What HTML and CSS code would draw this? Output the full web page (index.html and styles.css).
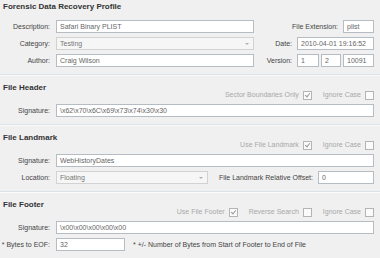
FILE: index.html
```html
<!DOCTYPE html>
<html lang="en">
<head>
  <meta charset="UTF-8">
  <title>Forensic Data Recovery Profile</title>
  <link rel="stylesheet" href="styles.css">
</head>
<body>

<div class="profile">

  <div class="block first">
    <h2>Forensic Data Recovery Profile</h2>
    <div class="row">
      <span class="lbl">Description:</span>
      <span class="field wide">Safari Binary PLIST</span>
      <span class="lbl-r">File Extension:</span>
      <span class="field ext">plist</span>
    </div>
    <div class="row">
      <span class="lbl">Category:</span>
      <span class="field wide select">Testing<i class="arrow"></i></span>
      <span class="lbl-r">Date:</span>
      <span class="field date">2010-04-01 19:16:52</span>
    </div>
    <div class="row">
      <span class="lbl">Author:</span>
      <span class="field wide">Craig Wilson</span>
      <span class="lbl-r">Version:</span>
      <span class="field v1">1</span>
      <span class="field v2">2</span>
      <span class="field ext">10091</span>
    </div>
  </div>

  <div class="block">
    <h2>File Header</h2>
    <div class="opts">
      <span class="opt">Sector Boundaries Only <i class="cb on"></i></span>
      <span class="opt">Ignore Case <i class="cb"></i></span>
    </div>
    <div class="row">
      <span class="lbl">Signature:</span>
      <span class="field grow">\x62\x70\x6C\x69\x73\x74\x30\x30</span>
    </div>
  </div>

  <div class="block">
    <h2>File Landmark</h2>
    <div class="opts">
      <span class="opt">Use File Landmark <i class="cb on"></i></span>
      <span class="opt">Ignore Case <i class="cb"></i></span>
    </div>
    <div class="row">
      <span class="lbl">Signature:</span>
      <span class="field grow">WebHistoryDates</span>
    </div>
    <div class="row">
      <span class="lbl">Location:</span>
      <span class="field loc select">Floating<i class="arrow"></i></span>
      <span class="lbl-r">File Landmark Relative Offset:</span>
      <span class="field offset">0</span>
    </div>
  </div>

  <div class="block">
    <h2>File Footer</h2>
    <div class="opts">
      <span class="opt">Use File Footer <i class="cb on"></i></span>
      <span class="opt">Reverse Search <i class="cb"></i></span>
      <span class="opt">Ignore Case <i class="cb"></i></span>
    </div>
    <div class="row">
      <span class="lbl">Signature:</span>
      <span class="field grow">\x00\x00\x00\x00\x00</span>
    </div>
    <div class="row">
      <span class="lbl">* Bytes to EOF:</span>
      <span class="field eof">32</span>
      <span class="note">* +/- Number of Bytes from Start of Footer to End of File</span>
    </div>
  </div>

</div>

</body>
</html>
```

FILE: styles.css
```css
body {
  margin: 0;
  background-color: #f0f0f0;
  font-family: "Liberation Sans", Arial, sans-serif;
  font-size: 7px;
  color: #444;
}

.profile {
  width: 380px;
  height: 258px;
  overflow: hidden;
}

.block {
  padding: 9px 6px 7px 0;
  border-top: 1px solid #dbe3ea;
  box-shadow: inset 0 1px 0 #fbfbfb;
}

.block.first {
  padding-top: 3px;
  border-top: none;
  box-shadow: none;
}

h2 {
  margin: 0 0 0 3px;
  height: 8px;
  line-height: 8px;
  font-size: 8px;
  font-weight: bold;
  color: #333;
}

.first h2 {
  margin-bottom: 9px;
}

.opts {
  display: flex;
  justify-content: flex-end;
  gap: 11px;
  height: 8px;
  margin-top: -1px;
  margin-bottom: 5px;
  color: #a8a8a8;
}

.opt {
  display: flex;
  align-items: center;
  gap: 4px;
  line-height: 8px;
}

.cb {
  display: block;
  width: 7px;
  height: 7px;
  border: 1px solid #b4b4b4;
  background: #fbfbfb;
  position: relative;
}

.cb.on::after {
  content: "";
  position: absolute;
  left: 2px;
  top: 0px;
  width: 2px;
  height: 4px;
  border-right: 1px solid #9a9a9a;
  border-bottom: 1px solid #9a9a9a;
  transform: rotate(40deg);
}

.row {
  display: flex;
  align-items: center;
  height: 13px;
  margin-bottom: 4px;
}

.row:last-child {
  margin-bottom: 0;
}

.lbl {
  width: 50px;
  margin-right: 6px;
  text-align: right;
  white-space: nowrap;
}

.lbl-r {
  margin-left: auto;
  margin-right: 5px;
  white-space: nowrap;
}

.field {
  box-sizing: border-box;
  height: 13px;
  line-height: 11px;
  padding-left: 3px;
  border: 1px solid #b5bcc4;
  background: #fff;
  color: #666;
  white-space: nowrap;
  overflow: hidden;
  position: relative;
}

.field.select {
  background: #f6f6f6;
  border-color: #d2d2d2;
  color: #777;
}

.arrow {
  position: absolute;
  right: 4px;
  top: 5px;
  border-left: 2px solid transparent;
  border-right: 2px solid transparent;
  border-top: 2px solid #b0b0b0;
}

.wide { width: 198px; }
.grow { flex: 1; }
.ext { width: 31px; }
.date { width: 77px; }
.v1 { width: 22px; margin-right: 2px; }
.v2 { width: 20px; margin-right: 2px; }
.loc { width: 152px; }
.offset { width: 56px; }
.eof { width: 69px; }

.note {
  margin-left: 8px;
  white-space: nowrap;
}
```
